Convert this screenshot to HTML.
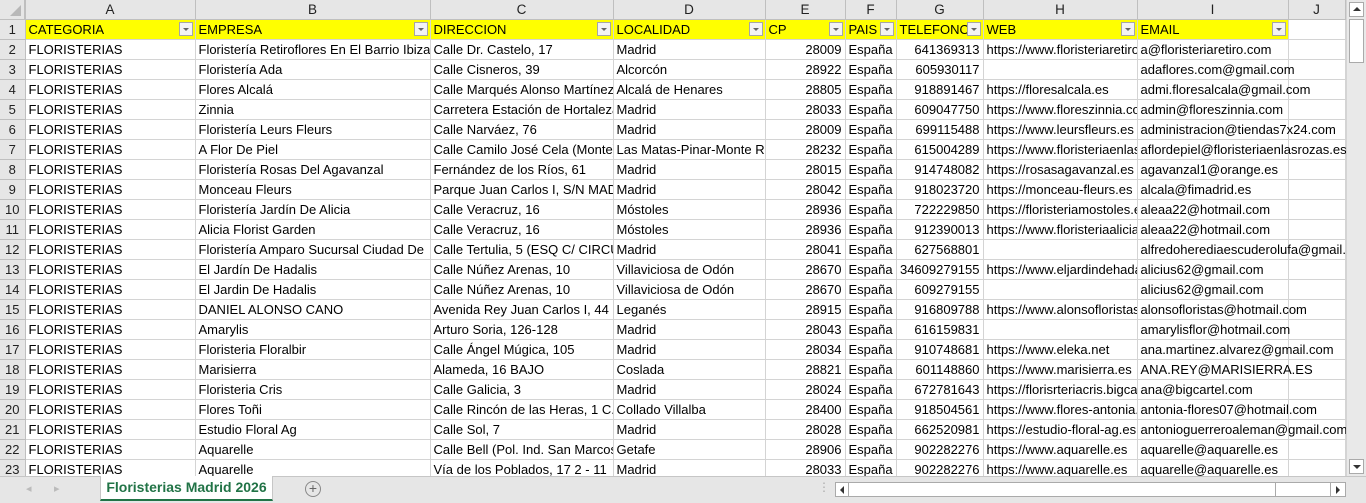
<!DOCTYPE html>
<html><head><meta charset="utf-8"><style>
body{margin:0;width:1366px;height:502px;overflow:hidden;background:#fff;font-family:"Liberation Sans",Arial,sans-serif;font-size:13px;color:#000;position:relative}
table{border-collapse:collapse;table-layout:fixed;position:absolute;left:0;top:0;width:1345px}
td{height:19px;padding:0 3px;border-right:1px solid #d4d4d4;border-bottom:1px solid #d4d4d4;white-space:nowrap;overflow:hidden;line-height:19px;position:relative;box-sizing:border-box}
tr.ch td{background:#e6e6e6;text-align:center;color:#222;border-color:#bfbfbf;font-size:13.5px}
td.rh{background:#e6e6e6;text-align:center;color:#222;border-color:#bfbfbf;padding:0}
tr.hd td.y{background:#ffff00}
td.n{text-align:right}
td.ov{overflow:visible}
.dd{position:absolute;right:2px;top:2px;width:14px;height:14px;border:1px solid #a6a6a6;background:#f3f3f3;box-sizing:border-box}
.dd:after{content:"";position:absolute;left:3px;top:5px;border-left:3px solid transparent;border-right:3px solid transparent;border-top:3px solid #666}
.bot{position:absolute;left:0;top:476px;width:1366px;height:26px;background:#e6e6e6;border-top:1px solid #c6c6c6}
.vs{position:absolute;left:1346px;top:0;width:20px;height:476px;background:#e9e9e9;border-left:1px solid #d4d4d4}
</style></head><body>
<table>
<colgroup><col style="width:25px"><col style="width:170px"><col style="width:235px"><col style="width:183px"><col style="width:152px"><col style="width:80px"><col style="width:51px"><col style="width:87px"><col style="width:154px"><col style="width:151px"><col style="width:57px"></colgroup>
<tr class="ch"><td class="rh" style="background:#e6e6e6"></td><td>A</td><td>B</td><td>C</td><td>D</td><td>E</td><td>F</td><td>G</td><td>H</td><td>I</td><td>J</td></tr>
<tr class="hd"><td class="rh">1</td><td class="y">CATEGORIA<span class="dd"></span></td><td class="y">EMPRESA<span class="dd"></span></td><td class="y">DIRECCION<span class="dd"></span></td><td class="y">LOCALIDAD<span class="dd"></span></td><td class="y">CP<span class="dd"></span></td><td class="y">PAIS<span class="dd"></span></td><td class="y">TELEFONO<span class="dd"></span></td><td class="y">WEB<span class="dd"></span></td><td class="y">EMAIL<span class="dd"></span></td><td></td></tr>
<tr><td class="rh">2</td><td>FLORISTERIAS</td><td>Floristería Retiroflores En El Barrio Ibiza</td><td>Calle Dr. Castelo, 17</td><td>Madrid</td><td class="n">28009</td><td>España</td><td class="n">641369313</td><td>https://www.floristeriaretiro.com</td><td class="ov">a@floristeriaretiro.com</td><td></td></tr>
<tr><td class="rh">3</td><td>FLORISTERIAS</td><td>Floristería Ada</td><td>Calle Cisneros, 39</td><td>Alcorcón</td><td class="n">28922</td><td>España</td><td class="n">605930117</td><td></td><td class="ov">adaflores.com@gmail.com</td><td></td></tr>
<tr><td class="rh">4</td><td>FLORISTERIAS</td><td>Flores Alcalá</td><td>Calle Marqués Alonso Martínez</td><td>Alcalá de Henares</td><td class="n">28805</td><td>España</td><td class="n">918891467</td><td>https://floresalcala.es</td><td class="ov">admi.floresalcala@gmail.com</td><td></td></tr>
<tr><td class="rh">5</td><td>FLORISTERIAS</td><td>Zinnia</td><td>Carretera Estación de Hortaleza</td><td>Madrid</td><td class="n">28033</td><td>España</td><td class="n">609047750</td><td>https://www.floreszinnia.com</td><td class="ov">admin@floreszinnia.com</td><td></td></tr>
<tr><td class="rh">6</td><td>FLORISTERIAS</td><td>Floristería Leurs Fleurs</td><td>Calle Narváez, 76</td><td>Madrid</td><td class="n">28009</td><td>España</td><td class="n">699115488</td><td>https://www.leursfleurs.es</td><td class="ov">administracion@tiendas7x24.com</td><td></td></tr>
<tr><td class="rh">7</td><td>FLORISTERIAS</td><td>A Flor De Piel</td><td>Calle Camilo José Cela (Monte)</td><td>Las Matas-Pinar-Monte Rozas</td><td class="n">28232</td><td>España</td><td class="n">615004289</td><td>https://www.floristeriaenlasrozas</td><td class="ov">aflordepiel@floristeriaenlasrozas.es</td><td></td></tr>
<tr><td class="rh">8</td><td>FLORISTERIAS</td><td>Floristería Rosas Del Agavanzal</td><td>Fernández de los Ríos, 61</td><td>Madrid</td><td class="n">28015</td><td>España</td><td class="n">914748082</td><td>https://rosasagavanzal.es</td><td class="ov">agavanzal1@orange.es</td><td></td></tr>
<tr><td class="rh">9</td><td>FLORISTERIAS</td><td>Monceau Fleurs</td><td>Parque Juan Carlos I, S/N MADRID</td><td>Madrid</td><td class="n">28042</td><td>España</td><td class="n">918023720</td><td>https://monceau-fleurs.es</td><td class="ov">alcala@fimadrid.es</td><td></td></tr>
<tr><td class="rh">10</td><td>FLORISTERIAS</td><td>Floristería Jardín De Alicia</td><td>Calle Veracruz, 16</td><td>Móstoles</td><td class="n">28936</td><td>España</td><td class="n">722229850</td><td>https://floristeriamostoles.es</td><td class="ov">aleaa22@hotmail.com</td><td></td></tr>
<tr><td class="rh">11</td><td>FLORISTERIAS</td><td>Alicia Florist Garden</td><td>Calle Veracruz, 16</td><td>Móstoles</td><td class="n">28936</td><td>España</td><td class="n">912390013</td><td>https://www.floristeriaalicia.es</td><td class="ov">aleaa22@hotmail.com</td><td></td></tr>
<tr><td class="rh">12</td><td>FLORISTERIAS</td><td>Floristería Amparo Sucursal Ciudad De</td><td>Calle Tertulia, 5 (ESQ C/ CIRCULO)</td><td>Madrid</td><td class="n">28041</td><td>España</td><td class="n">627568801</td><td></td><td class="ov">alfredoherediaescuderolufa@gmail.com</td><td></td></tr>
<tr><td class="rh">13</td><td>FLORISTERIAS</td><td>El Jardín De Hadalis</td><td>Calle Núñez Arenas, 10</td><td>Villaviciosa de Odón</td><td class="n">28670</td><td>España</td><td class="n">34609279155</td><td>https://www.eljardindehadalis.es</td><td class="ov">alicius62@gmail.com</td><td></td></tr>
<tr><td class="rh">14</td><td>FLORISTERIAS</td><td>El Jardin De Hadalis</td><td>Calle Núñez Arenas, 10</td><td>Villaviciosa de Odón</td><td class="n">28670</td><td>España</td><td class="n">609279155</td><td></td><td class="ov">alicius62@gmail.com</td><td></td></tr>
<tr><td class="rh">15</td><td>FLORISTERIAS</td><td>DANIEL ALONSO CANO</td><td>Avenida Rey Juan Carlos I, 44</td><td>Leganés</td><td class="n">28915</td><td>España</td><td class="n">916809788</td><td>https://www.alonsofloristas.com</td><td class="ov">alonsofloristas@hotmail.com</td><td></td></tr>
<tr><td class="rh">16</td><td>FLORISTERIAS</td><td>Amarylis</td><td>Arturo Soria, 126-128</td><td>Madrid</td><td class="n">28043</td><td>España</td><td class="n">616159831</td><td></td><td class="ov">amarylisflor@hotmail.com</td><td></td></tr>
<tr><td class="rh">17</td><td>FLORISTERIAS</td><td>Floristeria Floralbir</td><td>Calle Ángel Múgica, 105</td><td>Madrid</td><td class="n">28034</td><td>España</td><td class="n">910748681</td><td>https://www.eleka.net</td><td class="ov">ana.martinez.alvarez@gmail.com</td><td></td></tr>
<tr><td class="rh">18</td><td>FLORISTERIAS</td><td>Marisierra</td><td>Alameda, 16 BAJO</td><td>Coslada</td><td class="n">28821</td><td>España</td><td class="n">601148860</td><td>https://www.marisierra.es</td><td class="ov">ANA.REY@MARISIERRA.ES</td><td></td></tr>
<tr><td class="rh">19</td><td>FLORISTERIAS</td><td>Floristeria Cris</td><td>Calle Galicia, 3</td><td>Madrid</td><td class="n">28024</td><td>España</td><td class="n">672781643</td><td>https://florisrteriacris.bigcartel</td><td class="ov">ana@bigcartel.com</td><td></td></tr>
<tr><td class="rh">20</td><td>FLORISTERIAS</td><td>Flores Toñi</td><td>Calle Rincón de las Heras, 1 C.C.</td><td>Collado Villalba</td><td class="n">28400</td><td>España</td><td class="n">918504561</td><td>https://www.flores-antonia.es</td><td class="ov">antonia-flores07@hotmail.com</td><td></td></tr>
<tr><td class="rh">21</td><td>FLORISTERIAS</td><td>Estudio Floral Ag</td><td>Calle Sol, 7</td><td>Madrid</td><td class="n">28028</td><td>España</td><td class="n">662520981</td><td>https://estudio-floral-ag.es</td><td class="ov">antonioguerreroaleman@gmail.com</td><td></td></tr>
<tr><td class="rh">22</td><td>FLORISTERIAS</td><td>Aquarelle</td><td>Calle Bell (Pol. Ind. San Marcos)</td><td>Getafe</td><td class="n">28906</td><td>España</td><td class="n">902282276</td><td>https://www.aquarelle.es</td><td class="ov">aquarelle@aquarelle.es</td><td></td></tr>
<tr><td class="rh">23</td><td>FLORISTERIAS</td><td>Aquarelle</td><td>Vía de los Poblados, 17 2 - 11</td><td>Madrid</td><td class="n">28033</td><td>España</td><td class="n">902282276</td><td>https://www.aquarelle.es</td><td class="ov">aquarelle@aquarelle.es</td><td></td></tr>
</table>
<div style="position:absolute;left:0;top:0;width:25px;height:20px;background:#e6e6e6;border-right:1px solid #bfbfbf;border-bottom:1px solid #bfbfbf;box-sizing:border-box"><div style="position:absolute;right:3px;bottom:3px;border-left:11px solid transparent;border-bottom:11px solid #b8b8b8"></div></div>
<div class="vs">
<div style="position:absolute;left:2px;top:2px;width:15px;height:15px;background:#fff;border:1px solid #aaa;box-sizing:border-box"><div style="position:absolute;left:3px;top:4px;border-left:4px solid transparent;border-right:4px solid transparent;border-bottom:4px solid #333"></div></div>
<div style="position:absolute;left:2px;top:19px;width:15px;height:44px;background:#fff;border:1px solid #aaa;box-sizing:border-box"></div>
<div style="position:absolute;left:2px;top:459px;width:15px;height:15px;background:#fff;border:1px solid #aaa;box-sizing:border-box"><div style="position:absolute;left:3px;top:5px;border-left:4px solid transparent;border-right:4px solid transparent;border-top:4px solid #333"></div></div>
</div>
<div class="bot">
<span style="position:absolute;left:26px;top:5px;color:#bbb;font-size:11px">◂</span>
<span style="position:absolute;left:54px;top:5px;color:#bbb;font-size:11px">▸</span>
<div style="position:absolute;left:100px;top:-1px;width:171px;height:23px;background:#fff;border:1px solid #c6c6c6;border-top:none;border-bottom:2px solid #217346;font-weight:bold;color:#217346;font-size:14px;text-align:center;line-height:22px">Floristerias Madrid 2026</div>
<div style="position:absolute;left:305px;top:4px;width:14px;height:14px;border:1px solid #888;border-radius:50%;color:#666;font-size:14px;line-height:13px;text-align:center">+</div>
<span style="position:absolute;left:818px;top:3px;color:#aaa;font-size:12px">⋮</span>
<div style="position:absolute;left:835px;top:5px;width:511px;height:15px;background:#fff;border:1px solid #aaa;box-sizing:border-box"></div>
<div style="position:absolute;left:835px;top:5px;width:14px;height:15px;border:1px solid #aaa;box-sizing:border-box;background:#fff"><div style="position:absolute;left:4px;top:3px;border-top:4px solid transparent;border-bottom:4px solid transparent;border-right:4px solid #333"></div></div>
<div style="position:absolute;left:848px;top:5px;width:428px;height:15px;border:1px solid #aaa;box-sizing:border-box;background:#fff"></div>
<div style="position:absolute;left:1330px;top:5px;width:16px;height:15px;border:1px solid #aaa;box-sizing:border-box;background:#fff"><div style="position:absolute;left:5px;top:3px;border-top:4px solid transparent;border-bottom:4px solid transparent;border-left:4px solid #333"></div></div>
</div>
</body></html>
